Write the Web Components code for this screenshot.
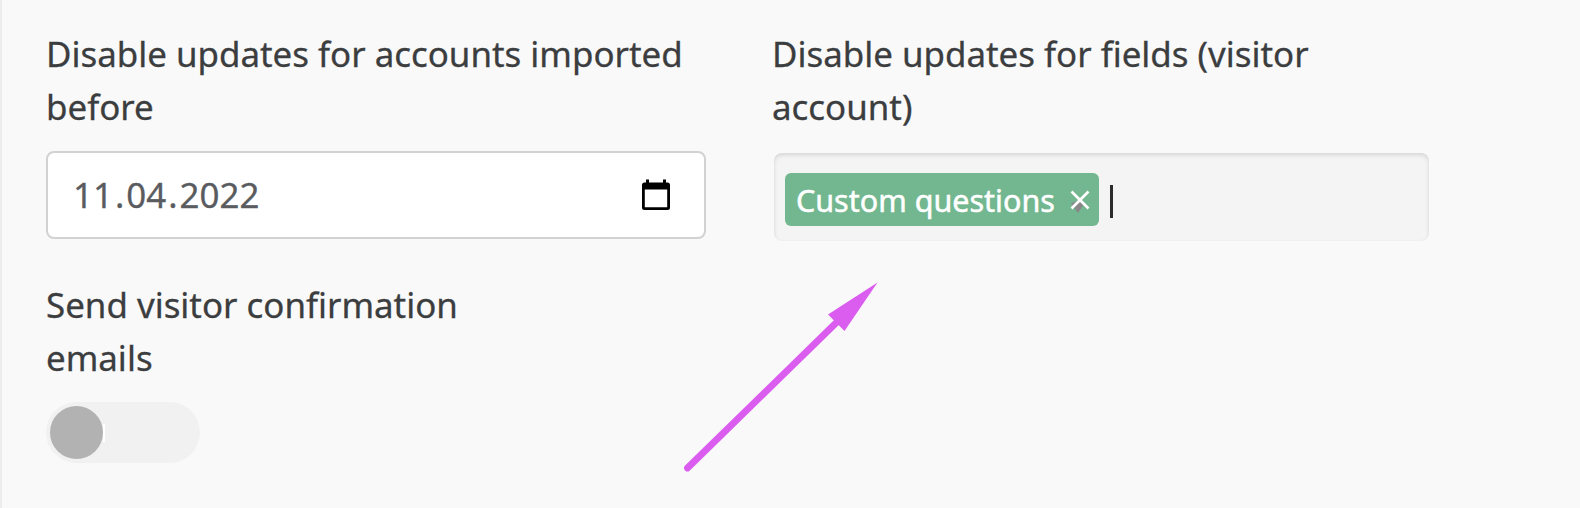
<!DOCTYPE html>
<html lang="en">
<head>
<meta charset="utf-8">
<title>Visitor import settings</title>
<style>
  body {
    margin: 0;
    background: #f9f9f9;
    color: #3b3d3f;
    font: 34.9px/52.5px "Noto Sans", "Open Sans", sans-serif;
    -webkit-text-stroke: .3px;
  }
</style>
</head>
<body>
<settings-panel>
  <form-field label="Disable updates for accounts imported before">
    <date-input value="11.04.2022"></date-input>
  </form-field>
  <form-field label="Disable updates for fields (visitor account)">
    <tag-select><tag-chip>Custom questions</tag-chip></tag-select>
  </form-field>
  <form-field class="narrow" label="Send visitor confirmation emails">
    <toggle-switch></toggle-switch>
  </form-field>
  <pointer-arrow slot="overlay"></pointer-arrow>
</settings-panel>

<script>
// Panel with a two column grid of fields
class SettingsPanel extends HTMLElement {
  constructor() {
    super();
    this.attachShadow({ mode: 'open' }).innerHTML = `
      <style>
        :host {
          display: block;
          position: relative;
          box-sizing: border-box;
          height: 508px;
          border-left: 2px solid #ececec;
          padding: 28px 0 0 44px;
          overflow: hidden;
        }
        .grid {
          display: grid;
          grid-template-columns: 660px 657px;
          column-gap: 66px;
          row-gap: 38px;
        }
        ::slotted(.narrow) { width: 480px; }
      </style>
      <div class="grid"><slot></slot></div>
      <slot name="overlay"></slot>
    `;
  }
}
customElements.define('settings-panel', SettingsPanel);

// Label above a slotted control
class FormField extends HTMLElement {
  constructor() {
    super();
    this.attachShadow({ mode: 'open' }).innerHTML = `
      <style>
        :host { display: block; }
        .label { padding-bottom: 18px; }
      </style>
      <div class="label"></div>
      <slot></slot>
    `;
    this.shadowRoot.querySelector('.label').textContent = this.getAttribute('label');
  }
}
customElements.define('form-field', FormField);

class DateInput extends HTMLElement {
  constructor() {
    super();
    this.attachShadow({ mode: 'open' }).innerHTML = `
      <style>
        :host {
          display: flex;
          align-items: center;
          justify-content: space-between;
          box-sizing: border-box;
          width: 659.5px;
          height: 88px;
          padding: 0 33px 0 23px;
          border: 2px solid #d2d2d2;
          border-radius: 8px;
          background: #fff;
          color: #5a5b5f;
        }
        .part { padding: 0 2px; }
        svg { display: block; width: 30px; height: 32px; margin-top: -1px; }
      </style>
      <div class="value"></div>
      <svg viewBox="0 0 30 32">
        <path d="M3.500 3.500h23a2.500 2.500 0 0 1 2.500 2.500v22.500a2.500 2.500 0 0 1-2.500 2.500H3.500a2.500 2.500 0 0 1-2.500-2.500V6A2.500 2.500 0 0 1 3.500 3.500zM3.800 10.500v17.700h22.400V10.500z" fill-rule="evenodd"/>
        <path d="M5 .5h3v4H5zM22 .5h3v4h-3z"/>
      </svg>
    `;
    // day, month and year are separate segments with a little side padding
    this.shadowRoot.querySelector('.value').innerHTML = this.getAttribute('value')
      .split('.').map(part => `<span class="part">${part}</span>`).join('.');
  }
}
customElements.define('date-input', DateInput);

class TagSelect extends HTMLElement {
  constructor() {
    super();
    this.attachShadow({ mode: 'open' }).innerHTML = `
      <style>
        :host {
          display: block;
          padding: 2px 0 0 2px;
        }
        .box {
          display: flex;
          align-items: center;
          box-sizing: border-box;
          width: 655px;
          height: 88px;
          padding: 4px 10px 0 11px;
          border-radius: 8px;
          background: #f4f4f4;
          box-shadow: inset 0 2px 4px rgba(0,0,0,.13);
        }
        .caret {
          width: 2.5px;
          height: 33px;
          margin: 5px 0 0 11px;
          background: #2b2b2b;
        }
      </style>
      <div class="box">
        <slot></slot>
        <span class="caret"></span>
      </div>
    `;
  }
}
customElements.define('tag-select', TagSelect);

class TagChip extends HTMLElement {
  constructor() {
    super();
    this.attachShadow({ mode: 'open' }).innerHTML = `
      <style>
        :host {
          display: flex;
          align-items: center;
          justify-content: space-between;
          box-sizing: border-box;
          width: 314px;
          height: 53px;
          padding: 2px 9px 0 11px;
          border-radius: 6px;
          background: #72b78f;
          color: #fff;
          font-size: 30.5px;
          white-space: nowrap;
          -webkit-text-stroke: .5px;
        }
        svg { display: block; width: 20px; height: 24px; margin-top: 3px; }
      </style>
      <slot></slot>
      <svg viewBox="0 0 20 24" fill="none">
        <path d="M1 13.500l7-3 6 3.500-6 9z" fill="#888"/>
        <path d="M1.500 1.500l17 17M18.500 1.500l-17 17" stroke="#fff" stroke-width="2.700"/>
      </svg>
    `;
  }
}
customElements.define('tag-chip', TagChip);

class ToggleSwitch extends HTMLElement {
  constructor() {
    super();
    this.attachShadow({ mode: 'open' }).innerHTML = `
      <style>
        :host {
          display: flex;
          align-items: center;
          box-sizing: border-box;
          width: 154px;
          height: 61px;
          padding-left: 4px;
          border-radius: 31px;
          background: #f1f1f1;
        }
        .knob {
          width: 53px;
          height: 53px;
          border-radius: 50%;
          background: #b2b2b2;
        }
        .edge { width: 2px; height: 18px; background: #fff; }
      </style>
      <span class="knob"></span>
      <span class="edge"></span>
    `;
  }
}
customElements.define('toggle-switch', ToggleSwitch);

// Annotation arrow lying over the panel
class PointerArrow extends HTMLElement {
  constructor() {
    super();
    this.attachShadow({ mode: 'open' }).innerHTML = `
      <style>
        :host { position: absolute; left: 678px; top: 280px; }
        svg { display: block; }
      </style>
      <svg width="204" height="196" viewBox="680 280 204 196">
        <path d="M687.500 468L838 321" stroke="#db5df0" stroke-width="6.800" stroke-linecap="round"/>
        <path d="M877.500 282.500L828 314.500 844.500 331z" fill="#db5df0"/>
      </svg>
    `;
  }
}
customElements.define('pointer-arrow', PointerArrow);
</script>
</body>
</html>
